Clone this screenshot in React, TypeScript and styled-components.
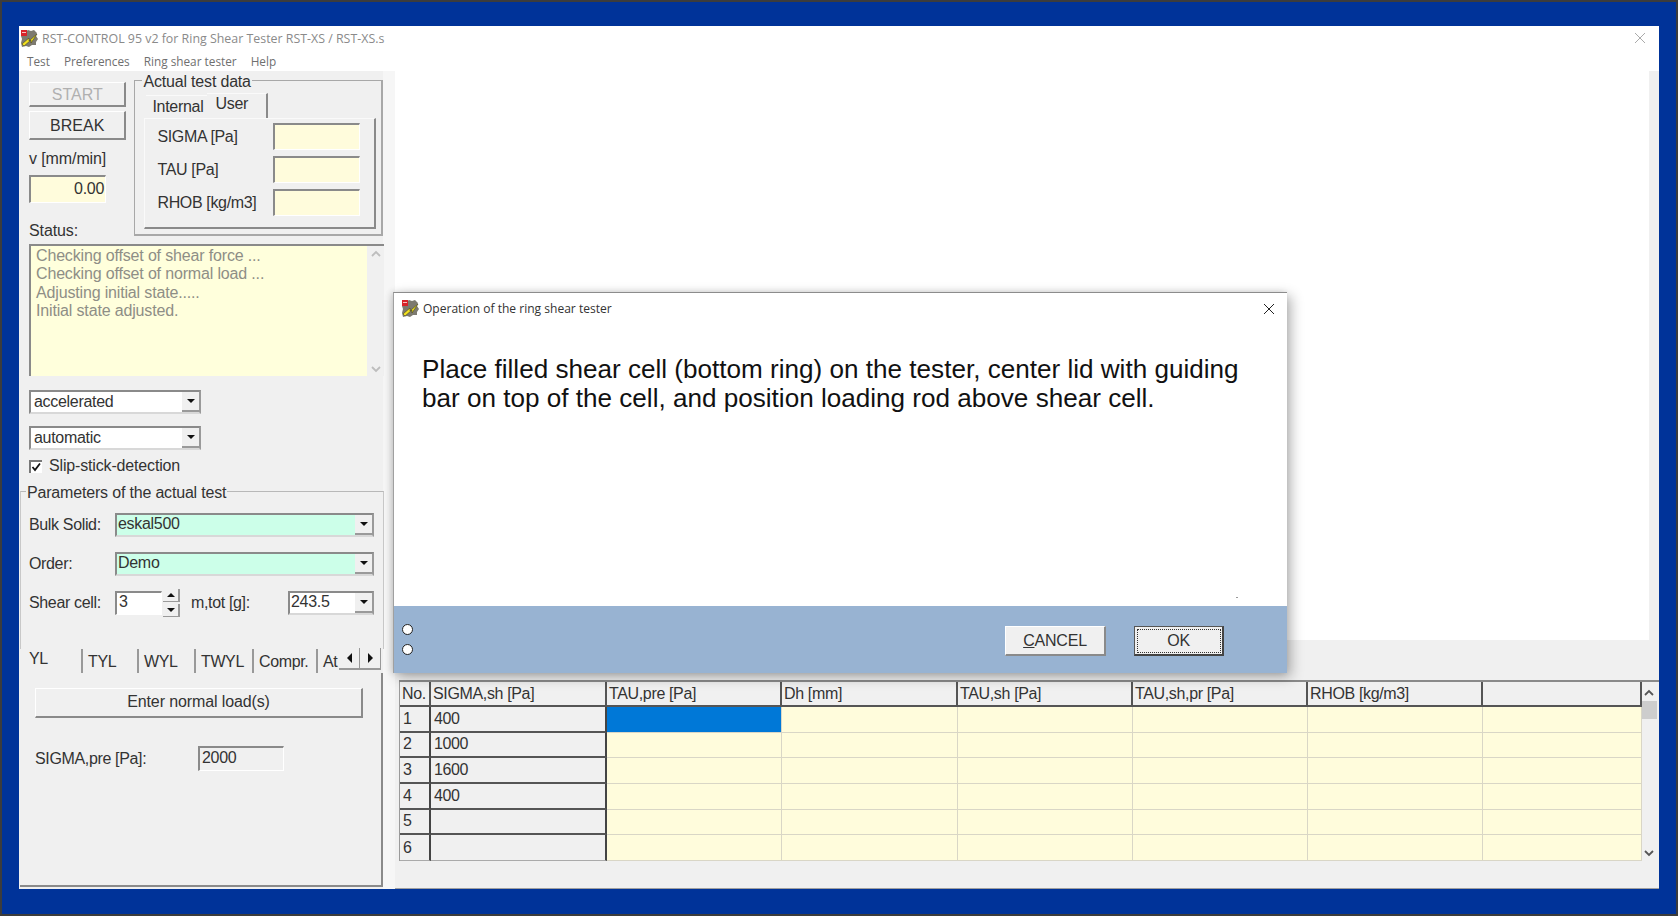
import React from 'react';
import styled, { createGlobalStyle } from 'styled-components';

const yellow = '#fffcdc';
const paleYellow = '#ffffdc';
const mint = '#ccffe9';
const face = '#f0f0f0';
const shade = '#8a8a8a';

const GlobalStyle = createGlobalStyle`
  html, body { margin: 0; padding: 0; background: #003399; }
  * { box-sizing: border-box; }
  body { font-family: "Liberation Sans", Arial, sans-serif; font-size: 16px; color: #333; }
`;

const Screen = styled.div`
  width: 1678px;
  height: 916px;
  display: flex;
  padding: 24px 17px 25px 17px;
  background: #003399;
  border: 2px solid #3c3c3c;
`;

const Window = styled.div`
  position: relative;
  flex: 1;
  display: flex;
  flex-direction: column;
  background: #fff;
`;

const TitleBar = styled.div`
  height: 24px;
  display: flex;
  align-items: center;
  padding: 0 13px 0 1px;
  font-family: "Open Sans", sans-serif;
  font-size: 12.4px;
  color: #8a8a8a;
  gap: 3px;
`;

const TitleText = styled.span`
  flex: 1;
`;

const MenuBar = styled.div`
  height: 21px;
  display: flex;
  padding: 0 0 0 8px;
  gap: 14px;
  align-items: center;
  font-family: "Open Sans", sans-serif;
  font-size: 11.8px;
  color: #6f6f6f;
`;

const Body = styled.div`
  flex: 1;
  display: flex;
  background: ${face};
  min-height: 0;
`;

const LeftPanel = styled.div`
  width: 376px;
  flex-shrink: 0;
  display: flex;
  flex-direction: column;
  background: ${face};
  border-right: 12px solid #f6f6f6;
`;

const TopRow = styled.div`
  display: flex;
  gap: 8px;
  padding: 9px 0 0 10px;
  height: 169px;
`;

const ButtonColumn = styled.div`
  width: 98px;
  display: flex;
  flex-direction: column;
  padding-top: 2px;
`;

const RaisedButton = styled.div<{ $h: number; $disabled?: boolean }>`
  height: ${p => p.$h}px;
  flex-shrink: 0;
  display: flex;
  align-items: center;
  justify-content: center;
  padding-top: 1px;
  background: ${face};
  border-top: 1px solid #fff;
  border-left: 1px solid #fff;
  border-right: 2px solid ${shade};
  border-bottom: 2px solid ${shade};
  color: ${p => (p.$disabled ? '#b0b0b0' : '#333')};
`;

const SmallLabel = styled.div<{ $mt: number }>`
  margin-top: ${p => p.$mt}px;
  line-height: 18px;
  letter-spacing: -0.1px;
  white-space: nowrap;
`;

const Sunken = styled.div<{ $bg: string; $w: number; $h: number }>`
  width: ${p => p.$w}px;
  height: ${p => p.$h}px;
  flex-shrink: 0;
  display: flex;
  align-items: center;
  padding: 0 2px 3px 2px;
  background: ${p => p.$bg};
  border-top: 2px solid ${shade};
  border-left: 2px solid ${shade};
  border-right: 1px solid #fff;
  border-bottom: 1px solid #fff;
  letter-spacing: -0.3px;
`;

const SpeedInput = styled(Sunken)`
  justify-content: flex-end;
  margin-top: 7px;
  padding: 0 1px 1px 2px;
`;

const Group = styled.div`
  position: relative;
  width: 250px;
  height: 156px;
  padding: 12px 0 0 9px;
  border: 1px solid #a8a8a8;
  border-bottom-width: 2px;
  border-right-width: 2px;
`;

const Legend = styled.span<{ $left: number }>`
  position: absolute;
  top: -7px;
  left: ${p => p.$left}px;
  padding: 0 1px;
  line-height: 16px;
  background: ${face};
  letter-spacing: -0.18px;
  white-space: nowrap;
`;

const InnerTabs = styled.div`
  height: 25px;
  display: flex;
  align-items: flex-end;
  padding-left: 2px;
`;

const InnerTab = styled.div<{ $active?: boolean; $w: number }>`
  width: ${p => p.$w}px;
  height: ${p => (p.$active ? 25 : 23)}px;
  display: flex;
  align-items: center;
  padding: ${p => (p.$active ? '0 0 4px 8px' : '0 0 0 6px')};
  letter-spacing: -0.3px;
  border-right: ${p => (p.$active ? `2px solid ${shade}` : 'none')};
  border-top: 1px solid #fafafa;
`;

const InnerPanel = styled.div`
  width: 232px;
  height: 111px;
  display: flex;
  flex-direction: column;
  gap: 6px;
  padding: 4px 0 0 12px;
  border-top: 1px solid #fafafa;
  border-left: 1px solid #fafafa;
  border-right: 2px solid ${shade};
  border-bottom: 2px solid ${shade};
`;

const Row = styled.div<{ $mt?: number }>`
  display: flex;
  align-items: center;
  margin-top: ${p => p.$mt || 0}px;
`;

const RowLabel = styled.span<{ $w: number; $ml?: number }>`
  width: ${p => p.$w}px;
  margin-left: ${p => p.$ml || 0}px;
  flex-shrink: 0;
  letter-spacing: -0.35px;
  white-space: nowrap;
`;

const StatusBox = styled.div`
  position: relative;
  width: 355px;
  height: 132px;
  margin: 4px 0 0 10px;
  flex-shrink: 0;
  display: flex;
  background: ${face};
  border-top: 2px solid ${shade};
  border-left: 2px solid ${shade};
`;

const StatusText = styled.div`
  flex: 1;
  background: ${paleYellow};
  padding: 1px 0 0 5px;
  line-height: 18.3px;
  color: #8e8e86;
  letter-spacing: -0.16px;
`;

const VScroll = styled.div`
  width: 17px;
  display: flex;
  flex-direction: column;
  justify-content: space-between;
  align-items: center;
  padding: 4px 0 3px;
`;

const ComboBox = styled.div<{ $w: number; $bg?: string; $mt?: number; $ml?: number }>`
  width: ${p => p.$w}px;
  height: 24px;
  flex-shrink: 0;
  margin-top: ${p => p.$mt || 0}px;
  margin-left: ${p => p.$ml || 0}px;
  display: flex;
  background: ${p => p.$bg || '#fff'};
  border: 2px solid ${shade};
  border-right-color: #9a9a9a;
  border-bottom-color: #d8d8d8;
`;

const ComboText = styled.span<{ $up?: boolean }>`
  flex: 1;
  padding: ${p => (p.$up ? '0 0 3px 1px' : '0 0 0 3px')};
  display: flex;
  align-items: center;
  letter-spacing: -0.3px;
`;

const ComboButton = styled.span`
  width: 17px;
  display: flex;
  align-items: center;
  justify-content: center;
  background: ${face};
  border-bottom: 2px solid #9a9a9a;
`;

const DownTriangle = styled.span`
  width: 0;
  height: 0;
  border-left: 4px solid transparent;
  border-right: 4px solid transparent;
  border-top: 4px solid #111;
`;

const UpTriangle = styled(DownTriangle)`
  border-top: none;
  border-bottom: 4px solid #111;
`;

const CheckRow = styled.div`
  display: flex;
  align-items: center;
  gap: 7px;
  height: 16px;
  margin: 8px 0 0 10px;
  letter-spacing: -0.16px;
`;

const CheckBox = styled.span`
  width: 13px;
  height: 13px;
  display: flex;
  background: #fff;
  border-top: 2px solid #777;
  border-left: 2px solid #777;
`;

const ParamGroup = styled.div`
  position: relative;
  width: 364px;
  height: 158px;
  margin: 17px 0 0 1px;
  padding: 21px 0 0 8px;
  flex-shrink: 0;
  border-top: 1px solid #b8b8b8;
  border-left: 1px solid #c8c8c8;
  border-right: 1px solid #c8c8c8;
`;

const ParamRow = styled(Row)`
  height: 24px;
  margin-bottom: 15px;
`;

const SpinBox = styled.div`
  width: 17px;
  height: 28px;
  margin-left: 1px;
  display: flex;
  flex-direction: column;
  gap: 2px;
`;

const SpinPart = styled.span`
  flex: 1;
  display: flex;
  align-items: center;
  justify-content: center;
  background: ${face};
  border-right: 2px solid #9a9a9a;
  border-bottom: 1px solid #9a9a9a;
`;

const PageTabs = styled.div`
  height: 24px;
  margin: 0 0 0 5px;
  display: flex;
  flex-shrink: 0;
`;

const PageTab = styled.div<{ $w: number; $active?: boolean; $plain?: boolean }>`
  width: ${p => p.$w}px;
  flex-shrink: 0;
  display: flex;
  align-items: center;
  padding: ${p => (p.$active ? '0 0 4px 5px' : '2px 0 0 5px')};
  border-right: ${p => (p.$plain ? 'none' : '2px solid #999')};
  letter-spacing: -0.38px;
  white-space: nowrap;
`;

const TabScroller = styled.div`
  width: 42px;
  height: 22px;
  margin-top: -1px;
  display: flex;
`;

const ScrollPart = styled.span`
  flex: 1;
  display: flex;
  align-items: center;
  justify-content: center;
  background: ${face};
  border-right: 1px solid #999;
  border-bottom: 2px solid #999;
`;

const LeftTriangle = styled.span`
  width: 0;
  height: 0;
  border-top: 5px solid transparent;
  border-bottom: 5px solid transparent;
  border-right: 5px solid #111;
`;

const RightTriangle = styled(LeftTriangle)`
  border-right: none;
  border-left: 5px solid #111;
`;

const TabPanel = styled.div`
  width: 363px;
  height: 214px;
  margin-left: 1px;
  padding: 15px 0 0 15px;
  flex-shrink: 0;
  border-right: 2px solid ${shade};
  border-bottom: 2px solid ${shade};
`;

const WideButton = styled(RaisedButton)`
  width: 328px;
  letter-spacing: -0.12px;
  padding: 0 0 2px 0;
`;

const RightColumn = styled.div`
  flex: 1;
  display: flex;
  flex-direction: column;
  min-width: 0;
  border-bottom: 1px solid #a0a0a0;
`;

const WhiteArea = styled.div`
  height: 569px;
  margin-right: 10px;
  background: #fff;
  flex-shrink: 0;
`;

const Strip = styled.div`
  height: 42px;
  flex-shrink: 0;
  border-bottom: 2px solid ${shade};
  margin-left: 4px;
`;

const GridWrap = styled.div`
  display: flex;
  margin-left: 4px;
  height: 179px;
  flex-shrink: 0;
`;

const Grid = styled.div`
  display: grid;
  grid-template-columns: 31px 176px 175px 176px 175px 175px 175px 159px;
  grid-template-rows: 25px repeat(6, 25.67px);
  width: 1242px;
  border-left: 1px solid #9a9a9a;
`;

const HeadCell = styled.div`
  display: flex;
  align-items: center;
  padding: 0 0 0 2px;
  background: ${face};
  border-right: 2px solid #555;
  border-bottom: 2px solid #555;
  letter-spacing: -0.35px;
  white-space: nowrap;
  &:last-child { border-right: none; }
`;

const KeyCell = styled.div<{ $last?: boolean }>`
  display: flex;
  align-items: center;
  padding: 0 0 0 3px;
  background: ${face};
  border-right: 2px solid #444;
  border-bottom: ${p => (p.$last ? '1px solid #aaa' : '2px solid #555')};
  letter-spacing: -0.4px;
`;

const DataCell = styled.div<{ $selected?: boolean }>`
  background: ${p => (p.$selected ? '#0078d7' : yellow)};
  border-right: 1px solid #d9d6c6;
  border-bottom: 1px solid #d9d6c6;
`;

const GridScroll = styled.div`
  position: relative;
  width: 18px;
  display: flex;
  flex-direction: column;
  align-items: center;
  justify-content: space-between;
  padding: 7px 2px 4px 0;
`;

const Thumb = styled.span`
  position: absolute;
  top: 19px;
  left: 1px;
  width: 15px;
  height: 18px;
  background: #cdcdcd;
`;

const Dialog = styled.div`
  position: absolute;
  left: 374px;
  top: 266px;
  width: 894px;
  height: 381px;
  display: flex;
  flex-direction: column;
  background: #fff;
  border-top: 1px solid #8c8c8c;
  border-left: 1px solid #a0a0a0;
  box-shadow: 4px 4px 12px rgba(0, 0, 0, 0.3), -2px 0 6px rgba(0, 0, 0, 0.12);
`;

const DialogTitle = styled.div`
  height: 31px;
  display: flex;
  align-items: center;
  gap: 3px;
  padding: 0 12px 0 7px;
  font-family: "Open Sans", sans-serif;
  font-size: 12.05px;
  color: #333;
`;

const DialogMessage = styled.div`
  position: relative;
  flex: 1;
  padding: 31px 30px 0 28px;
  font-size: 26.1px;
  line-height: 29px;
  color: #111;
`;

const Speck = styled.span`
  position: absolute;
  right: 49px;
  bottom: 8px;
  width: 2px;
  height: 1px;
  background: #999;
`;

const DialogFooter = styled.div`
  height: 67px;
  display: flex;
  align-items: center;
  padding: 0 63px 0 8px;
  background: #98b3d2;
`;

const Radios = styled.div`
  display: flex;
  flex-direction: column;
  gap: 9px;
  margin-right: auto;
`;

const Radio = styled.span`
  width: 11px;
  height: 11px;
  border-radius: 50%;
  background: #fff;
  border: 1px solid #222;
`;

const DialogButtons = styled.div`
  display: flex;
  gap: 28px;
  margin-top: 3px;
`;

const DialogButton = styled.div<{ $w: number; $focus?: boolean }>`
  width: ${p => p.$w}px;
  height: 30px;
  display: flex;
  align-items: center;
  justify-content: center;
  background: ${face};
  border-top: 1px solid ${p => (p.$focus ? '#555' : '#fff')};
  border-left: 1px solid ${p => (p.$focus ? '#555' : '#fff')};
  border-right: 2px solid ${p => (p.$focus ? '#444' : shade)};
  border-bottom: 2px solid ${p => (p.$focus ? '#444' : shade)};
  outline: ${p => (p.$focus ? '1px dotted #333' : 'none')};
  outline-offset: -4px;
  letter-spacing: -0.2px;
`;

const AppIcon = () => (
  <svg width="19" height="19" viewBox="0 0 19 19" style={{ flexShrink: 0 }}>
    <path d="M5 3 L8 1 L11 2 L14 1 L17 4 L16 7 L18 10 L16 13 L16 16 L12 16 L9 18 L6 17 L2 18 L1 14 L2 10 L1 7 Z" fill="#7d7a70" />
    <rect x="1" y="1" width="6" height="6" fill="#d8232a" />
    <rect x="2" y="3" width="4" height="1" fill="#f4c0c0" />
    <path d="M2 15 L9 9 L9 12 L17 5 L11 14 L11 11 L4 17 Z" fill="#f2e021" stroke="#3a3a10" strokeWidth="0.5" />
  </svg>
);

const CloseIcon = ({ color }: { color: string }) => (
  <svg width="12" height="12" viewBox="0 0 12 12">
    <path d="M1 1 L11 11 M11 1 L1 11" stroke={color} strokeWidth="1" fill="none" />
  </svg>
);

const Chevron = ({ up, color }: { up?: boolean; color: string }) => (
  <svg width="10" height="7" viewBox="0 0 10 7">
    <path d={up ? 'M1 6 L5 2 L9 6' : 'M1 1 L5 5 L9 1'} stroke={color} strokeWidth="1.8" fill="none" />
  </svg>
);

const Combo = ({ text, w, bg, mt, ml, up }: { text: string; w: number; bg?: string; mt?: number; ml?: number; up?: boolean }) => (
  <ComboBox $w={w} $bg={bg} $mt={mt} $ml={ml}>
    <ComboText $up={up}>{text}</ComboText>
    <ComboButton><DownTriangle /></ComboButton>
  </ComboBox>
);

const headers = ['No.', 'SIGMA,sh [Pa]', 'TAU,pre [Pa]', 'Dh [mm]', 'TAU,sh [Pa]', 'TAU,sh,pr [Pa]', 'RHOB [kg/m3]', ''];
const rows = [
  ['1', '400'],
  ['2', '1000'],
  ['3', '1600'],
  ['4', '400'],
  ['5', ''],
  ['6', ''],
];

const App = () => {
  return (
    <>
      <GlobalStyle />
      <Screen>
        <Window>
          <TitleBar>
            <AppIcon />
            <TitleText>RST-CONTROL 95 v2 for Ring Shear Tester RST-XS / RST-XS.s</TitleText>
            <CloseIcon color="#aaa" />
          </TitleBar>
          <MenuBar>
            <span>Test</span>
            <span>Preferences</span>
            <span>Ring shear tester</span>
            <span>Help</span>
          </MenuBar>
          <Body>
            <LeftPanel>
              <TopRow>
                <ButtonColumn>
                  <RaisedButton $h={25} $disabled>START</RaisedButton>
                  <RaisedButton $h={29} style={{ marginTop: 4 }}>BREAK</RaisedButton>
                  <SmallLabel $mt={10}>v [mm/min]</SmallLabel>
                  <SpeedInput $bg={yellow} $w={77} $h={28}>0.00</SpeedInput>
                  <SmallLabel $mt={19}>Status:</SmallLabel>
                </ButtonColumn>
                <Group>
                  <Legend $left={7}>Actual test data</Legend>
                  <InnerTabs>
                    <InnerTab $w={61}>Internal</InnerTab>
                    <InnerTab $w={61} $active>User</InnerTab>
                  </InnerTabs>
                  <InnerPanel>
                    <Row>
                      <RowLabel $w={116}>SIGMA [Pa]</RowLabel>
                      <Sunken $bg={yellow} $w={87} $h={27} />
                    </Row>
                    <Row>
                      <RowLabel $w={116}>TAU [Pa]</RowLabel>
                      <Sunken $bg={yellow} $w={87} $h={27} />
                    </Row>
                    <Row>
                      <RowLabel $w={116}>RHOB [kg/m3]</RowLabel>
                      <Sunken $bg={yellow} $w={87} $h={27} />
                    </Row>
                  </InnerPanel>
                </Group>
              </TopRow>
              <StatusBox>
                <StatusText>
                  Checking offset of shear force ...<br />
                  Checking offset of normal load ...<br />
                  Adjusting initial state.....<br />
                  Initial state adjusted.
                </StatusText>
                <VScroll>
                  <Chevron up color="#bdbdbd" />
                  <Chevron color="#bdbdbd" />
                </VScroll>
              </StatusBox>
              <Combo text="accelerated" w={172} mt={14} ml={10} />
              <Combo text="automatic" w={172} mt={12} ml={10} />
              <CheckRow>
                <CheckBox>
                  <svg width="11" height="11" viewBox="0 0 11 11">
                    <path d="M1.5 5 L4 8 L9 1.5" stroke="#111" strokeWidth="1.8" fill="none" />
                  </svg>
                </CheckBox>
                Slip-stick-detection
              </CheckRow>
              <ParamGroup>
                <Legend $left={5}>Parameters of the actual test</Legend>
                <ParamRow>
                  <RowLabel $w={86}>Bulk Solid:</RowLabel>
                  <Combo text="eskal500" w={259} bg={mint} up />
                </ParamRow>
                <ParamRow>
                  <RowLabel $w={86}>Order:</RowLabel>
                  <Combo text="Demo" w={259} bg={mint} up />
                </ParamRow>
                <ParamRow>
                  <RowLabel $w={86}>Shear cell:</RowLabel>
                  <Sunken $bg="#fff" $w={47} $h={24}>3</Sunken>
                  <SpinBox>
                    <SpinPart><UpTriangle /></SpinPart>
                    <SpinPart><DownTriangle /></SpinPart>
                  </SpinBox>
                  <RowLabel $w={97} $ml={11}>m,tot [g]:</RowLabel>
                  <Combo text="243.5" w={86} up />
                </ParamRow>
              </ParamGroup>
              <PageTabs>
                <PageTab $w={59} $active>YL</PageTab>
                <PageTab $w={56}>TYL</PageTab>
                <PageTab $w={57}>WYL</PageTab>
                <PageTab $w={58}>TWYL</PageTab>
                <PageTab $w={64}>Compr.</PageTab>
                <PageTab $w={21} $plain>At</PageTab>
                <TabScroller>
                  <ScrollPart><LeftTriangle /></ScrollPart>
                  <ScrollPart><RightTriangle /></ScrollPart>
                </TabScroller>
              </PageTabs>
              <TabPanel>
                <WideButton $h={30}>Enter normal load(s)</WideButton>
                <Row $mt={28}>
                  <RowLabel $w={163}>SIGMA,pre [Pa]:</RowLabel>
                  <Sunken $bg={face} $w={86} $h={25}>2000</Sunken>
                </Row>
              </TabPanel>
            </LeftPanel>
            <RightColumn>
              <WhiteArea />
              <Strip />
              <GridWrap>
                <Grid>
                  {headers.map((h, i) => (
                    <HeadCell key={i}>{h}</HeadCell>
                  ))}
                  {rows.map((r, i) => (
                    <React.Fragment key={r[0]}>
                      <KeyCell $last={i === 5}>{r[0]}</KeyCell>
                      <KeyCell $last={i === 5}>{r[1]}</KeyCell>
                      {[0, 1, 2, 3, 4, 5].map(c => (
                        <DataCell key={c} $selected={i === 0 && c === 0} />
                      ))}
                    </React.Fragment>
                  ))}
                </Grid>
                <GridScroll>
                  <Chevron up color="#555" />
                  <Thumb />
                  <Chevron color="#555" />
                </GridScroll>
              </GridWrap>
            </RightColumn>
          </Body>
          <Dialog>
            <DialogTitle>
              <AppIcon />
              <TitleText>Operation of the ring shear tester</TitleText>
              <CloseIcon color="#222" />
            </DialogTitle>
            <DialogMessage>
              Place filled shear cell (bottom ring) on the tester, center lid with guiding bar on top of the cell, and position loading rod above shear cell.
              <Speck />
            </DialogMessage>
            <DialogFooter>
              <Radios>
                <Radio />
                <Radio />
              </Radios>
              <DialogButtons>
                <DialogButton $w={101}><span><u>C</u>ANCEL</span></DialogButton>
                <DialogButton $w={90} $focus>OK</DialogButton>
              </DialogButtons>
            </DialogFooter>
          </Dialog>
        </Window>
      </Screen>
    </>
  );
};

export default App;
